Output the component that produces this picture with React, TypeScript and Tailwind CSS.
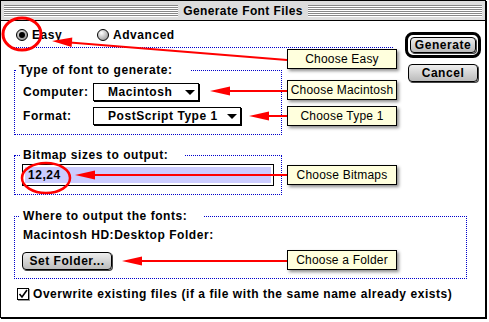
import React from 'react';

interface RadioProps {
  checked?: boolean;
  label: string;
  className?: string;
}

const Radio: React.FC<RadioProps> = ({ checked, label, className = '' }) => (
  <div className={`flex items-center gap-[4px] ${className}`}>
    <span
      className={`flex h-[12px] w-[12px] items-center justify-center rounded-full border border-black ${
        checked
          ? 'bg-[radial-gradient(circle_at_40%_35%,#eeeeee,#777777)]'
          : 'bg-[radial-gradient(circle_at_35%_30%,#ffffff,#aaaaaa_70%,#888888)]'
      }`}
    >
      {checked && <span className="h-[6px] w-[6px] rounded-full bg-black" />}
    </span>
    <span>{label}</span>
  </div>
);

const Popup: React.FC<{ value: string; className?: string }> = ({ value, className = '' }) => (
  <div
    className={`flex h-[18px] items-center justify-between border border-black bg-white pl-[14px] pr-[3px] shadow-[1px_1px_0_#000] ${className}`}
  >
    <span>{value}</span>
    <svg width="10" height="5" viewBox="0 0 10 5">
      <path d="M0 0h10L5 5z" fill="#000" />
    </svg>
  </div>
);

const MacButton: React.FC<{ children: React.ReactNode; className?: string }> = ({
  children,
  className = ''
}) => (
  <div
    className={`flex items-center justify-center rounded-[4px] border border-black bg-[linear-gradient(#eeeeee,#bbbbbb)] shadow-[1px_1px_0_#444] ${className}`}
  >
    {children}
  </div>
);

const Callout: React.FC<{ text: string; className: string }> = ({ text, className }) => (
  <div
    className={`absolute left-[287px] flex h-[20px] w-[110px] items-center justify-center border border-black bg-[#ffffdd] font-normal tracking-[0.2px] shadow-[2px_2px_3px_rgba(0,0,0,0.45)] ${className}`}
  >
    {text}
  </div>
);

const stripes =
  'h-[12px] flex-1 bg-[repeating-linear-gradient(to_bottom,#888888_0px,#888888_1px,#ffffff_1px,#ffffff_2px)]';

const App: React.FC = () => {
  return (
    <div className="relative h-[322px] w-[489px] overflow-hidden bg-white font-['Liberation_Sans',Arial,sans-serif] text-[12px] leading-[14px] text-black">
      <div className="h-[318px] w-[486px] border border-black bg-white shadow-[1px_1px_0_#000]">
        {/* title bar */}
        <div className="flex h-[20px] items-center border-b border-black bg-[#dddddd] px-[3px]">
          <div className={stripes} />
          <span className="px-[5px] font-bold tracking-[0.4px]">Generate Font Files</span>
          <div className={stripes} />
        </div>

        <div className="flex flex-col pl-[13px] pr-[2px] font-bold tracking-[0.55px]">
          <div className="flex gap-[10px]">
            <div className="flex w-[379px] shrink-0 flex-col">
              <div className="mt-[7px] flex h-[14px] items-center pl-[2px]">
                <Radio checked label="Easy" className="w-[81px]" />
                <Radio label="Advanced" />
              </div>
              <div className="mt-[5px] border-t border-dotted border-[#0000cc]" />

              <fieldset className="mt-[15px] w-[268px] border border-dotted border-[#0000cc] pb-[9px]">
                <legend className="ml-[1px] pl-[3px] pr-[17px]">Type of font to generate:</legend>
                <div className="mt-[6px] flex flex-col gap-[6px] pl-[8px]">
                  <div className="flex items-center">
                    <span className="w-[70px]">Computer:</span>
                    <Popup value="Macintosh" className="w-[106px]" />
                  </div>
                  <div className="flex items-center">
                    <span className="w-[70px]">Format:</span>
                    <Popup value="PostScript Type 1" className="w-[148px]" />
                  </div>
                </div>
              </fieldset>

              <fieldset className="mt-[13px] w-[268px] border border-dotted border-[#0000cc] pb-[8px]">
                <legend className="ml-[5px] pl-[3px] pr-[17px]">Bitmap sizes to output:</legend>
                <div className="ml-[7px] mt-[2px] h-[22px] w-[252px] border border-black bg-white p-[2px]">
                  <div className="flex h-full items-center bg-[#ccccff] pl-[3px]">12,24</div>
                </div>
              </fieldset>
            </div>

            <div className="mt-[11px] flex w-[80px] shrink-0 flex-col items-center">
              <div className="rounded-[8px] border-[3px] border-black bg-white p-[2px]">
                <MacButton className="h-[16px] w-[66px]">Generate</MacButton>
              </div>
              <MacButton className="mt-[6px] h-[18px] w-[70px]">Cancel</MacButton>
            </div>
          </div>

          <fieldset className="mt-[14px] w-[453px] border border-dotted border-[#0000cc] pb-[8px]">
            <legend className="ml-[5px] pl-[3px] pr-[17px]">Where to output the fonts:</legend>
            <div className="mt-[5px] pl-[8px]">Macintosh HD:Desktop Folder:</div>
            <MacButton className="ml-[7px] mt-[10px] h-[18px] w-[90px]">Set Folder...</MacButton>
          </fieldset>

          <div className="mt-[8px] flex h-[13px] items-center gap-[4px] pl-[3px]">
            <span className="flex h-[12px] w-[12px] items-center justify-center border border-black bg-white shadow-[1px_1px_0_#999]">
              <svg width="10" height="10" viewBox="0 0 10 10">
                <path d="M1.5 5 L4 8 L9 1" stroke="#000" strokeWidth="1.6" fill="none" />
              </svg>
            </span>
            <span>Overwrite existing files (if a file with the same name already exists)</span>
          </div>
        </div>
      </div>

      {/* annotations */}
      <svg className="pointer-events-none absolute left-0 top-0" width="489" height="322" viewBox="0 0 489 322">
        <g stroke="#ff0000" fill="none">
          <ellipse cx="22" cy="34" rx="19" ry="16" strokeWidth="3" />
          <ellipse cx="46" cy="178" rx="24" ry="15" strokeWidth="2.5" />
          <line x1="287" y1="60" x2="70" y2="42.5" strokeWidth="2" />
          <line x1="287" y1="91" x2="228" y2="91" strokeWidth="2" />
          <line x1="287" y1="116" x2="267" y2="116" strokeWidth="2" />
          <line x1="287" y1="175" x2="93" y2="175" strokeWidth="2" />
          <line x1="287" y1="261" x2="140" y2="261" strokeWidth="2" />
        </g>
        <g fill="#ff0000">
          <polygon points="52,41 72.3,37.5 71.6,47" />
          <polygon points="210,91 230,86.5 230,95.5" />
          <polygon points="249,116 269,111.5 269,120.5" />
          <polygon points="75,175 95,170.5 95,179.5" />
          <polygon points="122,261 142,256.5 142,265.5" />
        </g>
      </svg>

      <Callout text="Choose Easy" className="top-[49px]" />
      <Callout text="Choose Macintosh" className="top-[80px]" />
      <Callout text="Choose Type 1" className="top-[106px]" />
      <Callout text="Choose Bitmaps" className="top-[165px]" />
      <Callout text="Choose a Folder" className="top-[250px]" />
    </div>
  );
};

export default App;
